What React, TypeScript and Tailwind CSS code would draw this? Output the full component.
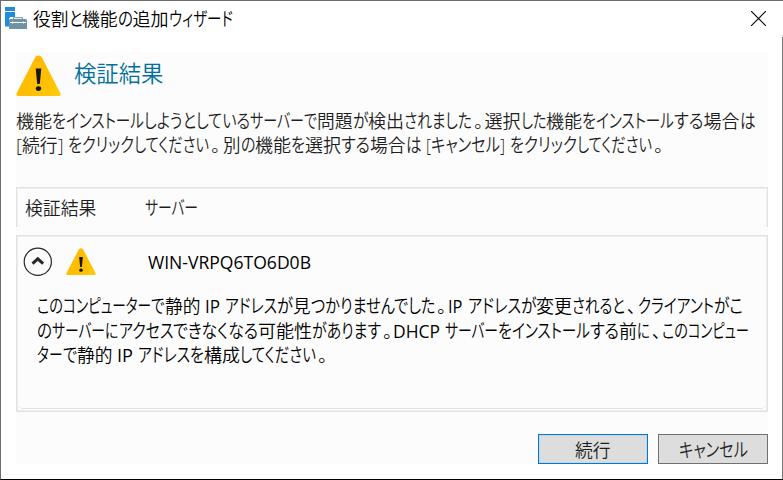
import { useLayoutEffect, useRef, useState } from "react";

type Piece = [text: string, end: number];

/** A run of characters fitted to a given advance width. */
function Run({ text, width }: { text: string; width: number }) {
  const ref = useRef<HTMLSpanElement>(null);
  const [scale, setScale] = useState(1);
  const fixed = text === "。" || text === "、";
  useLayoutEffect(() => {
    const el = ref.current;
    if (!el || fixed || !text.trim()) return;
    const previous = el.style.transform;
    el.style.transform = "none";
    const natural = el.getBoundingClientRect().width;
    el.style.transform = previous;
    if (natural > 0) setScale(width / natural);
  }, [text, width, fixed]);
  const kana = /[\u3041-\u30ff]/.test(text);
  const latin = /[A-Z]/.test(text);
  return (
    <span className="inline-block whitespace-pre" style={{ width }}>
      <span
        ref={ref}
        className={`inline-block origin-left whitespace-pre ${kana ? "text-[1.07em] [font-feature-settings:'palt']" : ""} ${latin ? "font-normal" : ""} ${fixed ? "ml-0.5 [font-feature-settings:'palt']" : ""}`}
        style={{ transform: `scaleX(${scale})` }}
      >
        {text}
      </span>
    </span>
  );
}

function Line({ start, pieces, className = "" }: { start: number; pieces: Piece[]; className?: string }) {
  return (
    <div className={`flex items-baseline whitespace-pre ${className}`}>
      {pieces.map(([text, end], i) => (
        <Run key={i} text={text} width={end - (i === 0 ? start : pieces[i - 1][1])} />
      ))}
    </div>
  );
}

const intro: Piece[][] = [
  [
    ["機能", 52], ["を", 66], ["インストール", 144], ["しようとしている", 250], ["サーバー", 304], ["で", 317],
    ["問題", 352.5], ["が", 368], ["検出", 404], ["されました", 472], ["。", 484.5], ["選択", 520.5], ["した", 546],
    ["機能", 582], ["を", 596], ["インストール", 674], ["する", 703.5], ["場合", 739.5], ["は", 755],
  ],
  [
    ["[", 22], ["続行", 57.5], ["]", 63], [" ", 68], ["を", 82], ["クリック", 134], ["してください", 209], ["。", 223],
    ["別", 240.5], ["の", 255], ["機能", 291], ["を", 305], ["選択", 341], ["する", 370], ["場合", 405.5], ["は", 421],
    [" ", 426], ["[", 431], ["キャンセル", 500], ["]", 505], [" ", 510], ["を", 524], ["クリック", 577],
    ["してください", 652], ["。", 666],
  ],
];

const detail: Piece[][] = [
  [
    ["この", 63], ["コンピューター", 151], ["で", 164.5], ["静的", 200], [" ", 205], ["IP", 220], [" ", 225],
    ["アドレス", 277], ["が", 293], ["見", 310.5], ["つかりませんでした", 435], ["。", 448], ["IP", 462.5],
    [" ", 467.5], ["アドレス", 520.5], ["が", 536], ["変更", 572], ["されると", 625], ["、", 638],
    ["クライアント", 714], ["がこ", 743],
  ],
  [
    ["の", 52], ["サーバー", 105], ["に", 118.5], ["アクセス", 173], ["できなくなる", 258], ["可能性", 312],
    ["があります", 381], ["。", 393], ["DHCP", 440], [" ", 445], ["サーバー", 498], ["を", 512],
    ["インストール", 590], ["する", 619], ["前", 637], ["に", 650], ["、", 662], ["この", 688], ["コンピュー", 749],
  ],
  [
    ["ター", 62.5], ["で", 76.5], ["静的", 112], [" ", 117], ["IP", 133], [" ", 138], ["アドレス", 190], ["を", 204],
    ["構成", 240], ["してください", 316], ["。", 329],
  ],
];

function Warning({ className }: { className: string }) {
  return (
    <svg viewBox="0 0 45 41" preserveAspectRatio="none" className={className}>
      <defs>
        <linearGradient id="amber" x1="0" y1="0" x2="1" y2="1">
          <stop offset="0" stopColor="#ffb900" />
          <stop offset="0.6" stopColor="#ffbf00" />
          <stop offset="1" stopColor="#ffcb08" />
        </linearGradient>
      </defs>
      <path d="M19.5 1.8Q22.5-1 25.5 1.8L44.4 38.2Q45.3 41 42.5 41H2.5Q-.3 41 .6 38.2Z" fill="url(#amber)" />
      <path d="M19.7 13.5H25.3L23.8 29H21.2Z" fill="#151515" />
      <ellipse cx="22.5" cy="33.6" rx="2.7" ry="2.4" fill="#151515" />
    </svg>
  );
}

function ServerIcon() {
  return (
    <svg viewBox="0 0 22 22" className="h-[22px] w-[22px] shrink-0">
      <path d="M0 0H10V4H0ZM0 5H10V10H5L4 12V19.5H0Z" fill="#1e8ddd" />
      <path d="M8.5 12V10.7H17.5V12" fill="none" stroke="#7192a3" strokeWidth="1" />
      <path d="M5 12H21L22 13V22H4V13Z" fill="#7192a3" />
      <path d="M5 15.5H21M7.5 14.5V16.5M18.5 14.5V16.5" stroke="#fff" strokeWidth="1" fill="none" />
    </svg>
  );
}

export default function App() {
  return (
    <main className="relative h-[480px] w-[783px] overflow-hidden border-t border-b border-l border-t-[#6d6b6d] border-b-black border-l-[#6d6b6d] bg-white font-['Open_Sans','Noto_Sans_CJK_JP',sans-serif] text-[18px] leading-6 text-[#1e1e1e]">
      <i className="absolute top-[87px] -left-px h-9 w-px bg-[#003353]" />
      <i className="absolute top-9 right-0 bottom-0 w-px bg-[#777]" />
      <header className="flex h-[51px] items-start pt-1.5 pl-1 text-black">
        <ServerIcon />
        <Line
          start={33.5}
          className="ml-[6px] font-[350]"
          pieces={[["役割", 69], ["と", 82.5], ["機能", 118], ["の", 133], ["追加", 169], ["ウィザード", 233]]}
        />
        <button aria-label="閉じる" className="mt-1 ml-auto mr-[17px]">
          <svg viewBox="0 0 15 15" className="h-[15px] w-[15px]" stroke="#000" strokeWidth="1.1">
            <path d="M0 0L15 15M15 0L0 15" />
          </svg>
        </button>
      </header>

      <section className="ml-[15px] flex h-[412px] w-[752px] flex-col bg-[#fcfcfc]">
        <div className="flex h-[57px] items-start pt-[3px]">
          <Warning className="h-[41px] w-[45px]" />
          <h1 className="mt-[3px] ml-[12.5px] text-[22.5px] leading-8 font-[350] text-[#00709c]">
            <Line start={0} pieces={[["検証結果", 89.5]]} />
          </h1>
        </div>
        <div className="h-[78px] font-[350]">
          {intro.map((pieces, i) => (
            <Line key={i} start={16} pieces={pieces} className="h-6" />
          ))}
        </div>

        <div className="flex h-[40px] shrink-0 items-start border-t border-r border-l border-[#e2e2e2] pt-2 pl-2 font-[350] shadow-[inset_0_1px_0_#eeeeee,inset_1px_0_0_#f2f2f2,inset_-1px_0_0_#f2f2f2]">
          <Line start={0} className="w-[120px]" pieces={[["検証結果", 71.5]]} />
          <Line start={0} pieces={[["サーバー", 53]]} />
        </div>
        <div className="mt-2 h-[177px] shrink-0 border border-[#e2e2e2] p-0.5 shadow-[inset_0_0_0_1px_#eeeeee]">
          <div className="h-full rounded-sm border-b border-b-[#e2e2e2] pl-1 text-black">
            <div className="flex h-[56px] items-start pt-[9px]">
              <svg viewBox="0 0 29 29" className="h-[29px] w-[29px]" fill="none" stroke="#292929">
                <circle cx="14.8" cy="14.7" r="13.6" strokeWidth="1.2" />
                <path d="M9.5 16.7L14.8 11.8L20.1 16.7" strokeWidth="3" />
              </svg>
              <Warning className="mt-px ml-[13.5px] h-[27px] w-[30px]" />
              <Line start={148} className="mt-[3px] ml-[52.5px]" pieces={[["WIN-VRPQ6TO6D0B", 311]]} />
            </div>
            <div className="ml-[14px] font-[350]">
              {detail.map((pieces, i) => (
                <Line key={i} start={37} pieces={pieces} className={i === 2 ? "h-6" : "h-[24.5px]"} />
              ))}
            </div>
          </div>
        </div>

        <footer className="mt-auto flex justify-end gap-2.5 font-[350]">
          <button className="flex h-[30px] w-[110px] items-center justify-center border border-[#0078d7] bg-[#ddd] pt-0.5 shadow-[inset_0_0_0_1px_#c5d6e4]">
            <Line start={0} pieces={[["続行", 35.5]]} />
          </button>
          <button className="flex h-[30px] w-[110px] items-center justify-center border border-[#707070] bg-[#ddd] pt-0.5">
            <Line start={0} pieces={[["キャンセル", 69]]} />
          </button>
        </footer>
      </section>
    </main>
  );
}
